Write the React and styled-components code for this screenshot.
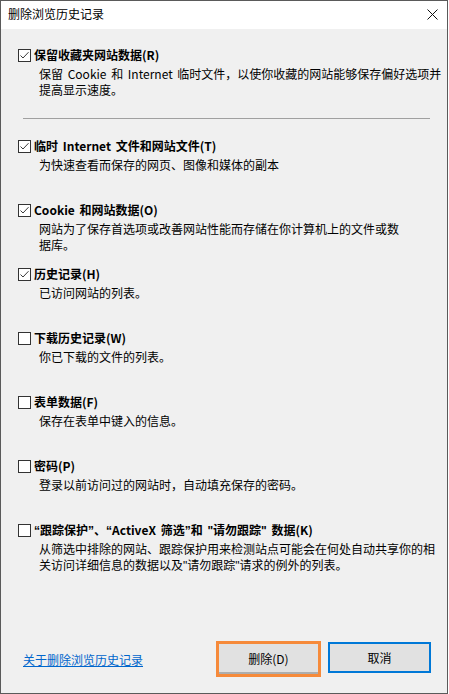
import React from "react";
import styled, { createGlobalStyle } from "styled-components";

const GlobalStyle = createGlobalStyle`
  html, body {
    margin: 0;
    padding: 0;
    background: #ffffff;
  }
  * {
    box-sizing: border-box;
  }
`;

const Q = styled.span`
  font-family: "Liberation Sans", sans-serif;
`;

const items = [
  {
    label: "保留收藏夹网站数据(R)",
    checked: true,
    lines: [
      "保留 Cookie 和 Internet 临时文件，以使你收藏的网站能够保存偏好选项并",
      "提高显示速度。",
    ],
  },
  {
    label: "临时 Internet 文件和网站文件(T)",
    checked: true,
    lines: ["为快速查看而保存的网页、图像和媒体的副本"],
  },
  {
    label: "Cookie 和网站数据(O)",
    checked: true,
    lines: [
      "网站为了保存首选项或改善网站性能而存储在你计算机上的文件或数",
      "据库。",
    ],
  },
  {
    label: "历史记录(H)",
    checked: true,
    lines: ["已访问网站的列表。"],
  },
  {
    label: "下载历史记录(W)",
    checked: false,
    lines: ["你已下载的文件的列表。"],
  },
  {
    label: "表单数据(F)",
    checked: false,
    lines: ["保存在表单中键入的信息。"],
  },
  {
    label: "密码(P)",
    checked: false,
    lines: ["登录以前访问过的网站时，自动填充保存的密码。"],
  },
  {
    label: (
      <>
        <Q>“</Q>跟踪保护<Q>”</Q>、<Q>“</Q>ActiveX 筛选<Q>”</Q>和 <Q>"</Q>请勿跟踪<Q>"</Q> 数据(K)
      </>
    ),
    checked: false,
    lines: [
      "从筛选中排除的网站、跟踪保护用来检测站点可能会在何处自动共享你的相",
      <>
        关访问详细信息的数据以及<Q>"</Q>请勿跟踪<Q>"</Q>请求的例外的列表。
      </>,
    ],
  },
];

const CheckMark = () => (
  <svg width="11" height="11" viewBox="0 0 11 11">
    <polyline
      points="1.5,5.5 4,8 9.5,2.2"
      fill="none"
      stroke="#3a3a3a"
      strokeWidth="1"
    />
  </svg>
);

const CloseIcon = () => (
  <svg width="11" height="11" viewBox="0 0 11 11">
    <path d="M0.5 0.5 L10.5 10.5 M10.5 0.5 L0.5 10.5" stroke="#111" strokeWidth="1" />
  </svg>
);

const Option = ({ item }) => (
  <OptionBlock $first={item.first}>
    <LabelRow>
      <Box>{item.checked && <CheckMark />}</Box>
      <Label>{item.label}</Label>
    </LabelRow>
    <Desc>
      {item.lines.map((line, i) => (
        <DescLine key={i}>{line}</DescLine>
      ))}
    </Desc>
  </OptionBlock>
);

export default function App() {
  const [first, ...rest] = items;
  return (
    <>
      <GlobalStyle />
      <Dialog>
        <TitleBar>
          <Title>删除浏览历史记录</Title>
          <CloseButton>
            <CloseIcon />
          </CloseButton>
        </TitleBar>
        <Body>
          <Option item={{ ...first, first: true }} />
          <Separator />
          {rest.map((item, i) => (
            <Option key={i} item={item} />
          ))}
        </Body>
        <Footer>
          <HelpLink href="#">关于删除浏览历史记录</HelpLink>
          <Buttons>
            <DeleteButton>删除(D)</DeleteButton>
            <CancelButton>取消</CancelButton>
          </Buttons>
        </Footer>
      </Dialog>
    </>
  );
}

const font = `"Noto Sans CJK SC", "Microsoft YaHei", sans-serif`;

const Dialog = styled.div`
  width: 448px;
  height: 694px;
  border: 1px solid #5a5a5a;
  background: #f0f0f0;
  display: flex;
  flex-direction: column;
  font-family: ${font};
  font-size: 12px;
  word-spacing: 2px;
  color: #000;
`;

const TitleBar = styled.div`
  height: 28px;
  background: #ffffff;
  display: flex;
  align-items: center;
  justify-content: space-between;
  padding: 0 9px 2px 7px;
`;

const Title = styled.span`
  font-size: 12px;
  line-height: 16px;
`;

const CloseButton = styled.span`
  display: flex;
  align-items: center;
`;

const Body = styled.div`
  padding: 18px 0 0 17px;
  display: flex;
  flex-direction: column;
`;

const OptionBlock = styled.div`
  display: flex;
  flex-direction: column;
  min-height: ${(p) => (p.$first ? "51px" : "64px")};
`;

const LabelRow = styled.div`
  display: flex;
  align-items: center;
  height: 16px;
`;

const Box = styled.span`
  width: 13px;
  height: 13px;
  border: 1px solid #333333;
  background: #ffffff;
  display: flex;
  align-items: center;
  justify-content: center;
  margin-top: 1px;
`;

const Label = styled.span`
  font-weight: 700;
  line-height: 16px;
  margin-left: 3px;
  white-space: nowrap;
`;

const Desc = styled.div`
  margin-top: 3px;
  padding-left: 21px;
  display: flex;
  flex-direction: column;
`;

const DescLine = styled.span`
  line-height: 16px;
  white-space: nowrap;
`;

const Separator = styled.div`
  height: 1px;
  background: #a0a0a0;
  margin: 20px 17px 19px 5px;
`;

const Footer = styled.div`
  margin-top: auto;
  display: flex;
  align-items: center;
  justify-content: space-between;
  padding: 0 16px 16px 22px;
`;

const HelpLink = styled.a`
  color: #0066cc;
  text-decoration: underline;
  font-size: 12px;
  line-height: 16px;
  margin-top: 2px;
  word-spacing: 0;
`;

const Buttons = styled.div`
  display: flex;
  align-items: center;
  gap: 7px;
`;

const BaseButton = styled.button`
  font-family: ${font};
  font-size: 12px;
  color: #000;
  background: #e1e1e1;
  display: flex;
  align-items: center;
  justify-content: center;
  padding: 0;
  cursor: pointer;
`;

const DeleteButton = styled(BaseButton)`
  width: 105px;
  height: 36px;
  border: 3px solid #f68a3a;
  box-shadow: inset 0 -2px 0 #adadad;
  padding-bottom: 2px;
`;

const CancelButton = styled(BaseButton)`
  width: 103px;
  height: 31px;
  border: 2px solid #0078d7;
  margin-top: -3px;
`;
